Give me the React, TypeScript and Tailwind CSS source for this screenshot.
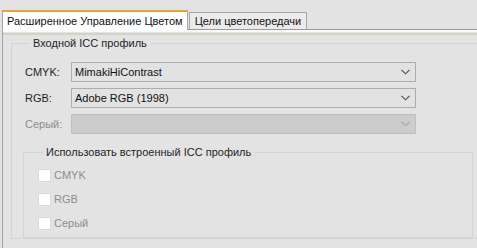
import React from "react";

function Chevron({ disabled }: { disabled?: boolean }) {
  return (
    <svg width="9" height="6" viewBox="0 0 9 6" className="mr-[5px]">
      <path d="M0.5 0.8 L4.5 4.8 L8.5 0.8" fill="none" stroke={disabled ? "#a8a8a8" : "#4d4d4d"} strokeWidth="1.1" />
    </svg>
  );
}

function ComboRow({ label, value, disabled }: { label: string; value?: string; disabled?: boolean }) {
  return (
    <div className="flex items-center h-[20px]">
      <span className={`w-[46px] ${disabled ? "text-[#8c8c8c]" : "text-[#1e1e1e]"}`}>{label}</span>
      <div
        className={`w-[345px] h-[20px] flex items-center justify-between border ${
          disabled ? "bg-[#cccccc] border-[#bfbfbf]" : "bg-[#e2e2e2] border-[#adadad]"
        }`}
      >
        <span className="pl-[3px] text-[#111]">{value}</span>
        <Chevron disabled={disabled} />
      </div>
    </div>
  );
}

function CheckRow({ label }: { label: string }) {
  return (
    <div className="flex items-center h-[13px] gap-[3px]">
      <span className="w-[13px] h-[13px] bg-white border border-[#dadada]" />
      <span className="text-[#8d8d8d]">{label}</span>
    </div>
  );
}

export default function App() {
  return (
    <div
      className="w-[477px] h-[248px] bg-[#e3e3e3] overflow-hidden text-[11px] leading-[13px]"
      style={{ fontFamily: '"Liberation Sans", Arial, sans-serif' }}
    >
      {/* Tabs */}
      <div className="h-[29px] flex items-end pl-[2px]">
        <div className="relative z-10 h-[20px] mb-[-1px] px-[4px] bg-white border-t-2 border-t-[#e8a23a] border-x border-x-[#a7a7a7] flex items-center text-[#111]">
          Расширенное Управление Цветом
        </div>
        <div className="h-[17px] ml-[1px] px-[5px] bg-[#ebebeb] border border-b-0 border-[#a7a7a7] flex items-center text-[#111]">
          Цели цветопередачи
        </div>
      </div>

      {/* Panel */}
      <div className="ml-[2px] border-l border-[#a4a4a4] h-[220px]">
        <div className="border-t border-[#9a9a9a]" />
        <div className="h-[2px] bg-[#fbfbfb]" />
        <div className="h-[2px] bg-[#d5d3c5] mt-[1px]" />

        <fieldset className="ml-[8px] mt-[2px] w-[520px] border border-[#d3d3d3] pl-[13px] pt-[12px]">
          <legend className="ml-[5px] px-[3px] text-[#1e1e1e]">Входной ICC профиль</legend>
          <div className="flex flex-col gap-[6px]">
            <ComboRow label="CMYK:" value="MimakiHiContrast" />
            <ComboRow label="RGB:" value="Adobe RGB (1998)" />
            <ComboRow label="Серый:" disabled />
          </div>

          <fieldset className="mt-[12px] ml-[-2px] w-[450px] border border-[#d3d3d3] pl-[14px] pt-[10px] pb-[7px]">
            <legend className="ml-[5px] px-[3px] text-[#1e1e1e]">Использовать встроенный ICC профиль</legend>
            <div className="flex flex-col gap-[11px]">
              <CheckRow label="CMYK" />
              <CheckRow label="RGB" />
              <CheckRow label="Серый" />
            </div>
          </fieldset>
        </fieldset>
      </div>
    </div>
  );
}
